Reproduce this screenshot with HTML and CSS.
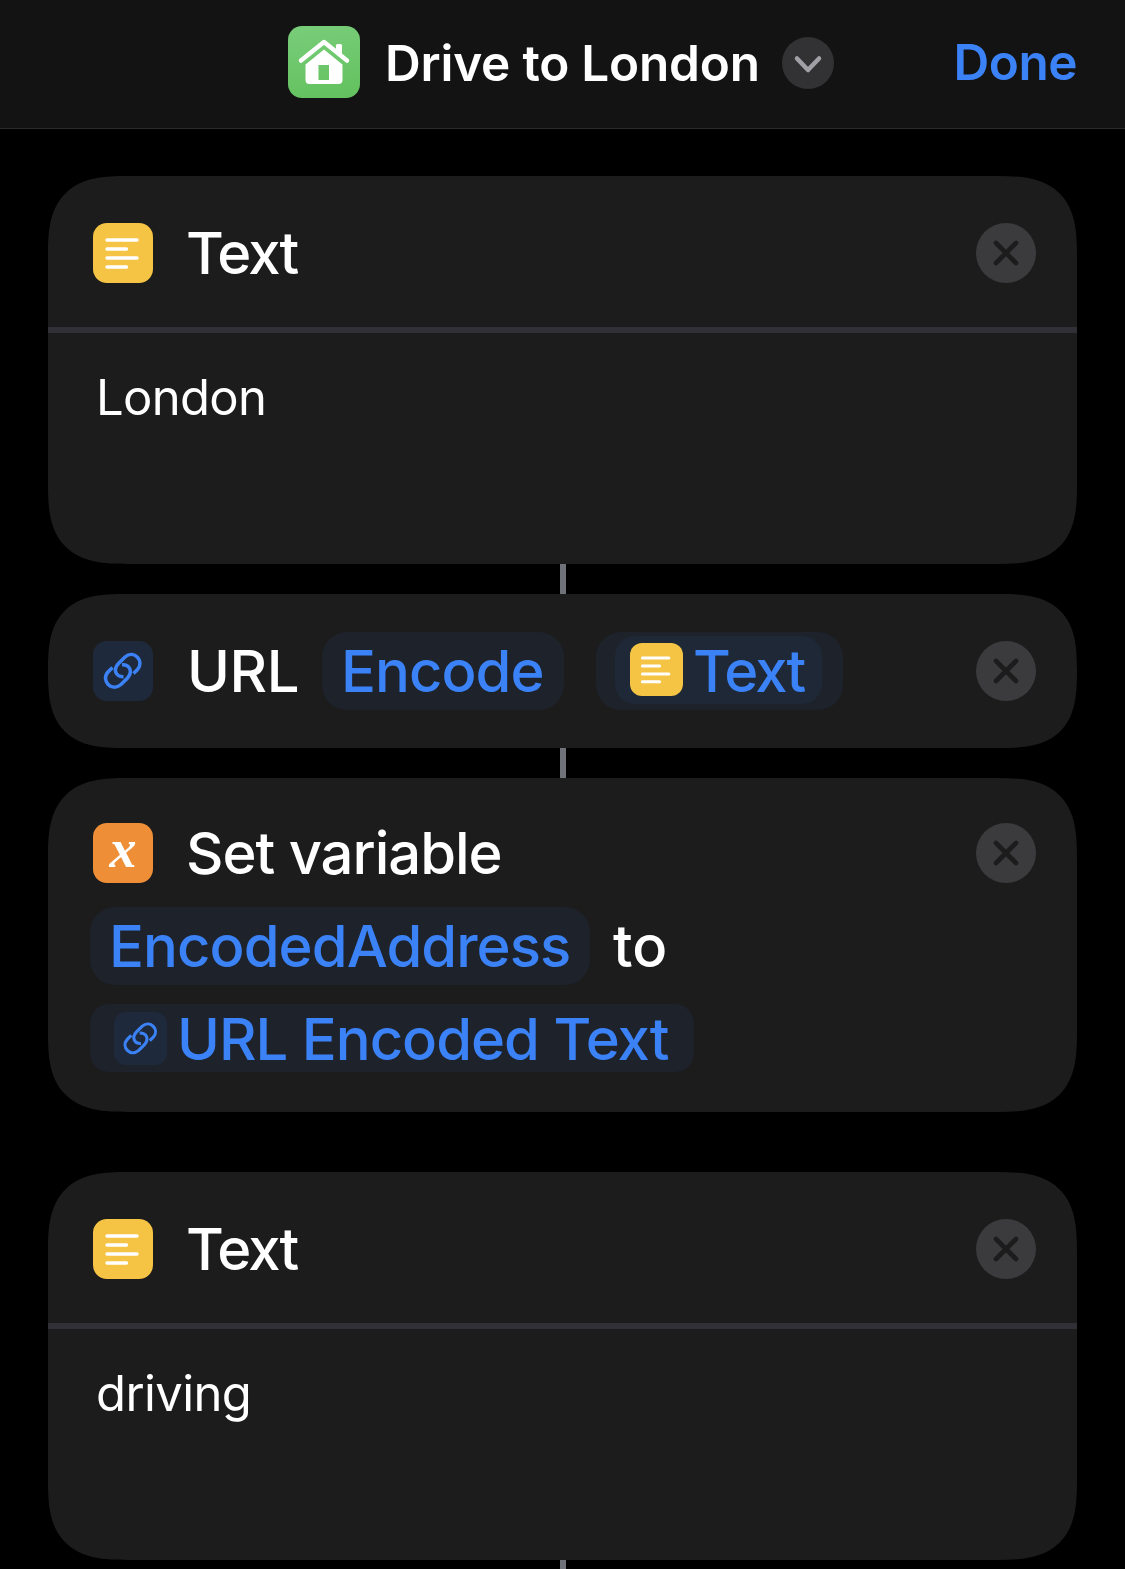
FILE: index.html
```html
<!DOCTYPE html>
<html lang="en">
<head>
<meta charset="utf-8">
<title>Drive to London</title>
<link rel="stylesheet" href="styles.css">
</head>
<body>
<svg class="defs" aria-hidden="true">
  <symbol id="lines" viewBox="0 0 60 60">
    <path d="M14 17H44M14 26H33.500M14 35H44M14 44H33.500" fill="none" stroke="#fff" stroke-width="3.400" stroke-linecap="round"/>
  </symbol>
  <symbol id="link" viewBox="0 0 60 60">
    <g fill="none" stroke="#3b82f7" stroke-width="3.500">
      <path d="M19.500 26.500L15 31C7.500 39.500 18.500 51.500 28 43.500L34.500 37C40 30.500 37 23.500 29 23.800"/>
      <path d="M40.500 32.500L44.500 28.500C52 20 41 8.500 32 16L25.500 22.500C19.500 29 23 36 30.500 35.700"/>
    </g>
  </symbol>
  <symbol id="close" viewBox="0 0 60 60">
    <path d="M20 20L40 40M40 20L20 40" fill="none" stroke="#1c1c1c" stroke-width="4.600" stroke-linecap="round"/>
  </symbol>
</svg>

<header class="topbar">
  <div class="title">
    <svg class="app-icon" viewBox="0 0 72 72">
      <path d="M13 34.500L36 16L59 34.500" fill="none" stroke="#fff" stroke-width="4.500" stroke-linecap="round" stroke-linejoin="round"/>
      <path d="M48 27V19.500Q48 18 49.500 18H52.500Q54 18 54 19.500V33Z" fill="#fff"/>
      <path fill-rule="evenodd" d="M36 23.500L54.500 38.500V54Q54.500 58 50.500 58H21.500Q17.500 58 17.500 54V38.500ZM30.500 39V54H41V39Z" fill="#fff"/>
    </svg>
    <h1 class="title-text">Drive to London</h1>
    <svg class="chevron" viewBox="0 0 52 52"><path d="M15 21.500L26 33L37 21.500" fill="none" stroke="#a0a0a6" stroke-width="4.500" stroke-linecap="round" stroke-linejoin="round"/></svg>
  </div>
  <span class="done">Done</span>
</header>

<main class="actions">
  <section class="card text-card">
    <div class="card-head">
      <svg class="icon yellow"><use href="#lines"/></svg>
      <span class="label t-text">Text</span>
      <svg class="close"><use href="#close"/></svg>
    </div>
    <div class="card-body t-london">London</div>
  </section>
  <div class="connector"></div>
  <section class="card url-card">
    <svg class="icon blue"><use href="#link"/></svg>
    <span class="label t-url">URL</span>
    <span class="chip encode t-encode">Encode</span>
    <span class="chip outer"><span class="token"><svg class="mini yellow" viewBox="0 0 60 60"><use href="#lines"/></svg><span class="t-token">Text</span></span></span>
    <svg class="close"><use href="#close"/></svg>
  </section>
  <div class="connector"></div>
  <section class="card var-card">
    <div class="row first">
      <span class="icon orange">x</span>
      <span class="label t-set">Set variable</span>
      <svg class="close"><use href="#close"/></svg>
    </div>
    <div class="row second">
      <span class="chip address t-address">EncodedAddress</span>
      <span class="to">to</span>
    </div>
    <div class="row third">
      <span class="chip result"><svg class="mini blue" viewBox="0 0 60 60"><use href="#link"/></svg><span class="t-result">URL Encoded Text</span></span>
    </div>
  </section>
  <section class="card text-card separate">
    <div class="card-head">
      <svg class="icon yellow"><use href="#lines"/></svg>
      <span class="label t-text">Text</span>
      <svg class="close"><use href="#close"/></svg>
    </div>
    <div class="card-body t-driving">driving</div>
  </section>
  <div class="connector last"></div>
</main>
</body>
</html>
```

FILE: styles.css
```css
* { box-sizing: border-box; }

body {
  margin: 0;
  width: 1125px;
  height: 1569px;
  overflow: hidden;
  background: #000;
  color: #fff;
  font: 500 58px/70px Inter, "Liberation Sans", sans-serif;
  white-space: nowrap;
}

svg { display: block; flex: none; }
.defs { position: absolute; width: 0; height: 0; }

.topbar {
  display: flex;
  justify-content: space-between;
  height: 129px;
  padding: 26px 48px 0 288px;
  background: #131313;
  border-bottom: 1px solid #2a2a2b;
}
.title { display: flex; align-items: center; height: 72px; }
.app-icon {
  width: 72px;
  height: 72px;
  border-radius: 14px;
  background: linear-gradient(170deg, #79cd7a, #62c15d);
}
.title-text {
  width: 373px;
  margin: 2px 24px 0 25px;
  font-size: 49.500px;
  font-weight: 600;
  line-height: 60px;
  letter-spacing: -0.220px;
}
.chevron { width: 52px; height: 52px; margin-top: 2px; border-radius: 50%; background: #323234; }
.done {
  font-size: 49.500px;
  font-weight: 600;
  line-height: 72px;
  letter-spacing: -0.500px;
  color: #3b82f7;
}

.actions { padding: 47px 48px 0; }
.card {
  border-radius: 57px;
  background: #1c1c1c;
}
/* Continuous corners where the browser can draw them */
@supports (corner-shape: superellipse(1.5)) {
  .card { border-radius: 80px; corner-shape: superellipse(1.5); }
}
.connector { width: 6px; height: 30px; margin-left: 512px; background: #707279; }
.connector.last { height: 9px; }

.icon {
  flex: none;
  width: 60px;
  height: 60px;
  border-radius: 14px;
}
.yellow { background: #f5c444; }
.orange {
  background: #ee8f37;
  font: italic 700 54px/53px "Liberation Serif", serif;
  text-align: center;
}
.blue { background: #1e2a3c; }
.label { margin-left: 34px; }
.close {
  width: 60px;
  height: 60px;
  margin-left: auto;
  border-radius: 50%;
  background: #3b3b3d;
}

.text-card { height: 388px; }
.separate { margin-top: 60px; }
.card-head {
  display: flex;
  align-items: center;
  height: 157px;
  padding: 2px 41px 0 45px;
  border-bottom: 6px solid #303036;
}
.t-text, .t-token { letter-spacing: -2px; }
.t-text { margin-left: 33px; }
.card-body {
  padding: 35px 48px;
  font-size: 49px;
  font-weight: 400;
  line-height: 60px;
}
.t-london { letter-spacing: -0.700px; }
.t-driving { letter-spacing: -0.600px; }

.url-card {
  display: flex;
  align-items: center;
  height: 154px;
  padding: 0 41px 0 45px;
}
.chip {
  display: flex;
  align-items: center;
  flex: none;
  height: 78px;
  border-radius: 25px;
  background: #1d222b;
  color: #3b82f7;
}
.t-url { width: 135px; letter-spacing: -0.400px; }
.encode { width: 242px; padding-left: 19px; letter-spacing: -0.950px; }
.outer { width: 247px; margin-left: 32px; padding: 0 0 2px 19px; }
.token {
  display: flex;
  align-items: center;
  width: 207px;
  height: 68px;
  padding-left: 15px;
  border-radius: 20px;
  background: #1e2836;
}
.mini { width: 53px; height: 53px; border-radius: 12px; }
.token .mini { margin-bottom: 1px; }
.t-token { margin: 1px 0 0 10px; }

.var-card { height: 334px; padding: 45px 41px 0 42px; }
.row { display: flex; align-items: center; }
.first { height: 60px; padding-left: 3px; }
.second { height: 78px; margin-top: 24px; }
.third { height: 68px; margin-top: 19px; }
.t-set { margin-left: 33px; letter-spacing: -1.020px; }
.address { width: 500px; padding-left: 19px; letter-spacing: -0.930px; }
.to { margin-left: 23px; }
.result { width: 604px; height: 68px; padding-left: 24px; border-radius: 19px; }
.t-result { margin: 1px 0 0 10px; letter-spacing: -1px; }
```
